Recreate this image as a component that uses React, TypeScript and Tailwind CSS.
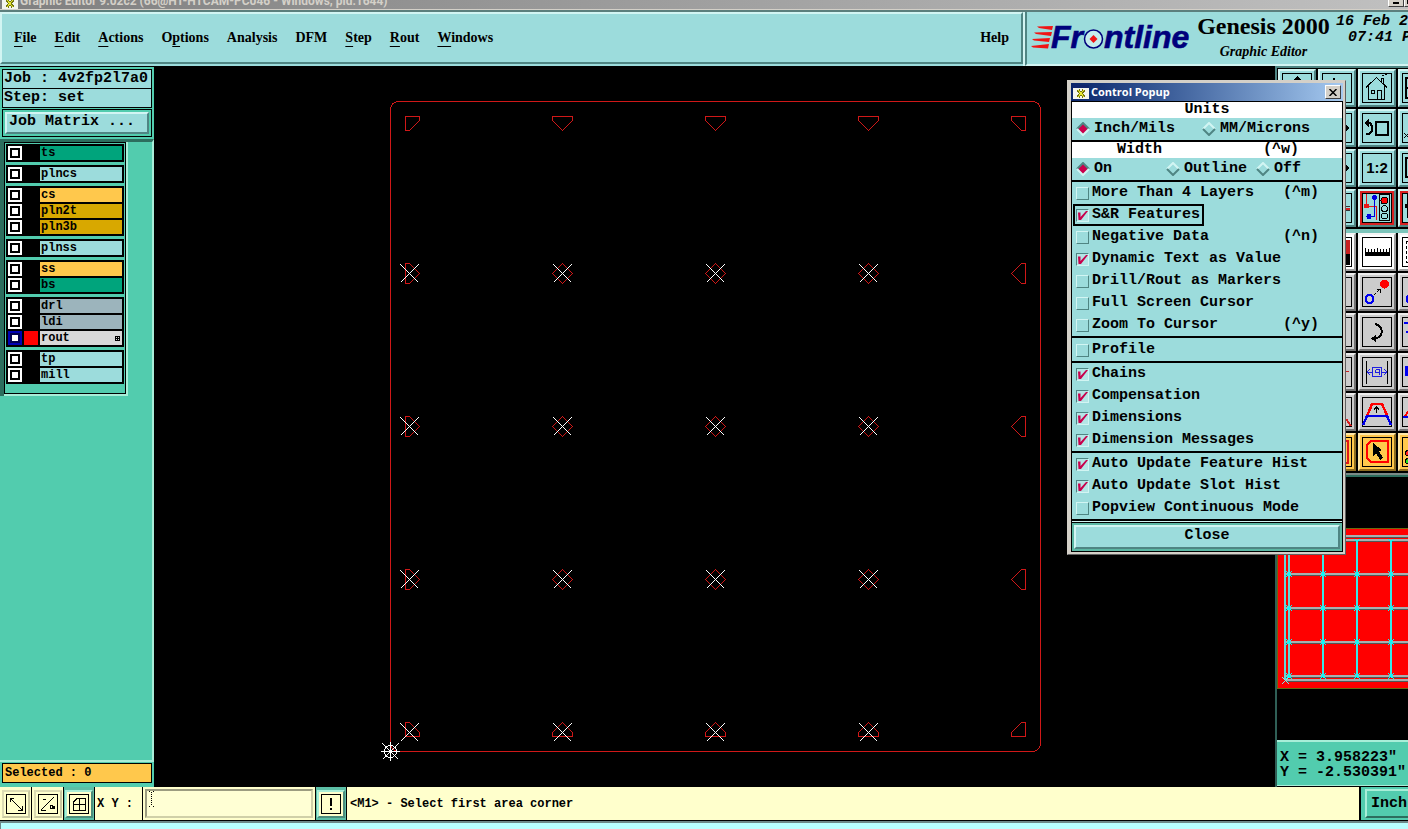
import { useState } from "react";
import type { ReactNode } from "react";

const MONO = "font-['Liberation_Mono','Courier_New',monospace]";
const SERIF = "font-['Liberation_Serif','Times_New_Roman',serif]";
const RAISED = "border-t-[#d2f5f3] border-l-[#d2f5f3] border-r-[#4f8583] border-b-[#4f8583]";

/* ===================== Header ===================== */
const MENU = [
  { pre: "", key: "F", post: "ile" },
  { pre: "", key: "E", post: "dit" },
  { pre: "", key: "A", post: "ctions" },
  { pre: "O", key: "p", post: "tions" },
  { pre: "Analysis", key: "", post: "" },
  { pre: "DFM", key: "", post: "" },
  { pre: "", key: "S", post: "tep" },
  { pre: "", key: "R", post: "out" },
  { pre: "", key: "W", post: "indows" },
];

function XIcon() {
  return (
    <svg width="16" height="14" viewBox="0 0 16 14" className="shrink-0" shapeRendering="crispEdges">
      <rect width="16" height="14" fill="#f4f4ee" />
      <rect width="16" height="3" fill="#10246c" />
      <path d="M5 5l6 7M11 5l-6 7" stroke="#77770e" strokeWidth="3" />
      <path d="M5 5l6 7M11 5l-6 7" stroke="#e8e832" strokeWidth="1" />
    </svg>
  );
}

function TitleBar() {
  return (
    <div className="flex h-[10px] items-end overflow-hidden border-b border-[#d4d0c8] bg-linear-to-r from-[#808080] to-[#c0c0c0] pr-1 pl-0.5">
      <XIcon />
      <span className="ml-0.5 flex-1 font-['Roboto','Noto_Sans',sans-serif] text-[12px] leading-[16px] font-bold whitespace-nowrap text-[#d4d0c8]">
        Graphic Editor 9.02c2 (66@HT-HTCAM-PC046 - Windows, pid:1644)
      </span>
      <button aria-label="Minimize" className="mb-0.5 flex h-[14px] w-4 shrink-0 items-end border border-t-white border-r-[#404040] border-b-[#404040] border-l-white bg-[#d4d0c8] pb-0.5 pl-1">
        <span className="h-0.5 w-1.5 bg-black" />
      </button>
      <button aria-label="Maximize" className="mb-0.5 h-[14px] w-4 -mr-4 shrink-0 border border-t-white border-r-[#404040] border-b-[#404040] border-l-white bg-[#d4d0c8] p-0.5">
        <span className="block size-full border border-black" />
      </button>
    </div>
  );
}

function Logo() {
  return (
    <svg width="160" height="44" viewBox="0 -8 160 44" className="shrink-0" role="img" aria-label="Frontline">
      <g fill="#f01414">
        <path d="M6 2.500L22 2L21 6L8 4z" />
        <path d="M3 8.500L21 8L20 12L5 10z" />
        <path d="M1 15L19 14L18 18L3 16.500z" />
        <path d="M0 22L18 20L17 24.500L2 23.500z" />
      </g>
      <g fill="#00007c" stroke="#00007c" strokeWidth="0.6" className="font-['Liberation_Sans',Arial,sans-serif] text-[32px] font-bold italic">
        <text x="20" y="24">Fr</text>
        <text x="73" y="24">ntline</text>
      </g>
      <circle cx="62.500" cy="15" r="9" fill="#c4ecec" stroke="#00007c" strokeWidth="1.500" />
      <path d="M62.500 11L66.500 15L62.500 19L58.500 15z" fill="#f01414" />
    </svg>
  );
}

function Header() {
  return (
    <header className="flex h-14 shrink-0 border-t-2 border-[#5b7f7d] bg-[#9cdcdc]">
      <nav className={`mb-0.5 flex min-w-0 flex-1 items-center gap-[18px] border-2 pr-3 pl-3 text-[14px] leading-5 font-bold ${RAISED} ${SERIF}`}>
        {MENU.map((m) => (
          <button key={m.pre + m.key + m.post} className="whitespace-nowrap">
            {m.pre}
            {m.key && <span className="underline decoration-1 underline-offset-4">{m.key}</span>}
            {m.post}
          </button>
        ))}
        <button className="ml-auto">Help</button>
      </nav>
      <div className="w-0.5 bg-[#d2f5f3]" />
      <div className="flex w-[383px] shrink-0 overflow-hidden border-b-2 border-l-2 border-b-[#d2f5f3] border-l-[#4f8583] pl-1">
        <div className="pt-1">
          <Logo />
        </div>
        <div className={`flex w-[145px] shrink-0 flex-col items-center whitespace-nowrap ${SERIF}`}>
          <h1 className="text-[24px] leading-7 font-bold">Genesis 2000</h1>
          <h2 className="mt-0.5 text-[14px] leading-5 font-bold italic">Graphic Editor</h2>
        </div>
        <div className={`pt-0.5 text-[15px] leading-4 font-bold whitespace-pre italic ${MONO}`}>
          <div>16 Feb 2</div>
          <div className="pl-3">07:41 P</div>
        </div>
      </div>
    </header>
  );
}

/* ===================== Layer list ===================== */
type Layer = { name: string; color: string; active?: boolean };

const TEAL = "bg-[#00a47c]";
const CYAN = "bg-[#9cdcdc]";
const AMBER = "bg-[#ffc84c]";
const GOLD = "bg-[#d8a800]";
const SLATE = "bg-[#9cb4bc]";

const LAYERS: Layer[][] = [
  [{ name: "ts", color: TEAL }],
  [{ name: "plncs", color: CYAN }],
  [
    { name: "cs", color: AMBER },
    { name: "pln2t", color: GOLD },
    { name: "pln3b", color: GOLD },
  ],
  [{ name: "plnss", color: CYAN }],
  [
    { name: "ss", color: AMBER },
    { name: "bs", color: TEAL },
  ],
  [
    { name: "drl", color: SLATE },
    { name: "ldi", color: SLATE },
    { name: "rout", color: "bg-[#d8d8d8]", active: true },
  ],
  [
    { name: "tp", color: CYAN },
    { name: "mill", color: CYAN },
  ],
];

function LayerRow({ layer }: { layer: Layer }) {
  return (
    <div className="flex h-3.5 gap-0.5">
      <button
        aria-label={`Show ${layer.name}`}
        className={`size-3.5 shrink-0 p-0.5 ${layer.active ? "bg-[#0000b4]" : "bg-white"}`}
      >
        <span className={`block size-2.5 border-2 bg-white ${layer.active ? "border-[#000050]" : "border-black"}`} />
      </button>
      <span className={`size-3.5 shrink-0 ${layer.active ? "bg-[#ff0000]" : "bg-black"}`} />
      <button className={`flex flex-1 items-center justify-between pl-px text-[12px] leading-[14px] font-bold ${layer.color}`}>
        {layer.name}
        {layer.active && (
          <svg width="5" height="5" viewBox="0 0 5 5" className="mr-0.5" shapeRendering="crispEdges">
            <path d="M0 .5h5M0 2.500h5M0 4.500h5M.5 0v5M2.500 0v5M4.500 0v5" stroke="#000" />
          </svg>
        )}
      </button>
    </div>
  );
}

function LeftPanel() {
  return (
    <aside className={`flex w-[154px] shrink-0 flex-col bg-[#52ccae] ${MONO}`}>
      <div className="border-t border-black px-0.5 pt-0.5">
        <div className="border border-black bg-[#9cdcdc] pl-px text-[15px] leading-[18px] font-bold whitespace-nowrap">Job : 4v2fp2l7a0</div>
        <div className="border border-t-0 border-black bg-[#9cdcdc] pl-px text-[15px] leading-[18px] font-bold">Step: set</div>
        <div className="mt-px border border-black p-0.5">
          <button className={`block w-full border-2 bg-[#9cdcdc] pt-px pb-[3px] pl-0.5 text-left text-[15px] leading-[14px] font-bold ${RAISED}`}>
            Job Matrix ...
          </button>
        </div>
      </div>
      <div className="mt-0.5 flex flex-1 flex-col border-t-3 border-r-2 border-t-[#2c6e5e] border-r-[#a8eed8]">
        <div className="flex">
          <div className="w-1 shrink-0 bg-[#2c6e5e]" />
          <div className="w-[124px] border-r-2 border-b-2 border-[#a8eed8]">
            <div className="flex flex-col gap-[3px] border border-black p-px pb-[9px]">
              {LAYERS.map((group) => (
                <div key={group[0].name} className="flex flex-col gap-0.5 bg-black p-0.5">
                  {group.map((l) => (
                    <LayerRow key={l.name} layer={l} />
                  ))}
                </div>
              ))}
            </div>
          </div>
        </div>
        <div className="mt-auto h-0.5 bg-[#a8eed8]" />
      </div>
      <div className="mb-0.5 px-0.5 pt-px pb-0.5">
        <div className="border border-black bg-[#ffc84c] pl-0.5 text-[12px] leading-[18px] font-bold">Selected : 0</div>
      </div>
    </aside>
  );
}

/* ===================== Drawing area ===================== */
const COLS = [562.5, 715.5, 868.5];
const ROWS = [273.5, 426.5, 579.5];

function Cross({ x, y }: { x: number; y: number }) {
  return <path d={`M${x - 9} ${y - 9}l18 18M${x + 9} ${y - 9}l-18 18`} stroke="#fff" />;
}

function BoardView() {
  return (
    <svg
      className="absolute inset-0 size-full"
      viewBox="154 66 1121 721"
      preserveAspectRatio="xMinYMin meet"
      fill="none"
      shapeRendering="crispEdges"
    >
      <g stroke="#d01818">
        <rect x="390.500" y="101.500" width="650" height="650" rx="8" />
        <path d="M405.500 116.500h14v4l-10 10h-4z" />
        <path d="M1011.500 116.500h14v14h-4l-10-10z" />
        <path d="M405.500 722.500h4l10 10v4h-14z" />
        <path d="M1025.500 722.500v14h-14v-4l10-10z" />
        {COLS.map((x) => (
          <g key={x}>
            <path d={`M${x - 10} 116.500h20v4l-10 10l-10-10z`} />
            <path d={`M${x} 722.500l10 10v4h-20v-4z`} />
            {ROWS.map((y) => (
              <path key={y} d={`M${x} ${y - 10}l10 10l-10 10l-10-10z`} />
            ))}
          </g>
        ))}
        {ROWS.map((y) => (
          <g key={y}>
            <path d={`M405.500 ${y - 10}h4l10 10l-10 10h-4z`} />
            <path d={`M1025.500 ${y - 10}v20h-4l-10-10l10-10z`} />
          </g>
        ))}
      </g>
      {[409.5, ...COLS].map((x) => [...ROWS, 732.5].map((y) => <Cross key={`${x}-${y}`} x={x} y={y} />))}
      <g stroke="#fff">
        <circle cx="390.500" cy="751.500" r="6" />
        <path d="M390.500 742v19M381 751.500h19M382.500 743.500l16 16M398.500 743.500l-16 16" />
      </g>
    </svg>
  );
}

/* ===================== Tool palette ===================== */
type Tone = "cyan" | "red" | "white" | "gray" | "amber";

const TONES: Record<Tone, string> = {
  cyan: "bg-[#9cdcdc] border-t-[#d2f5f3] border-l-[#d2f5f3] border-r-[#4f8583] border-b-[#4f8583]",
  red: "bg-[#d82020] border-t-[#d2f5f3] border-l-[#d2f5f3] border-r-[#4f8583] border-b-[#4f8583]",
  white: "bg-white border-t-[#f4f4f4] border-l-[#f4f4f4] border-r-[#a0a0a0] border-b-[#a0a0a0]",
  gray: "bg-[#cccccc] border-t-[#ececec] border-l-[#ececec] border-r-[#747474] border-b-[#747474]",
  amber: "bg-[#ffc84c] border-t-[#ffe8a8] border-l-[#ffe8a8] border-r-[#8c6c20] border-b-[#8c6c20]",
};

const ARROW_TIP = <path d="M8 15h14M22 10l5 5l-5 5z" stroke="#000" fill="#000" />;

const TOOLS: { tone: Tone; name: string; icons: ReactNode[] }[] = [
  {
    tone: "cyan",
    name: "Home",
    icons: [
      <path d="M15 3l7 7h-4v14h-6V10H8z" fill="#000" />,
      <path d="M5 15h14M12 5v20" stroke="#000" strokeWidth="2" />,
      <path d="M4 14.500L14.500 4.500L25 14.500M6.500 13v13.500h16V13M9.500 17.500h3v3h-3zM15.500 26v-9h4v9M19.500 9V5h2v6M20 3l2-1M23 2l2-1" stroke="#000" />,
      <path d="M3.500 4.500h22v20h-22zM3 15h22" stroke="#000" strokeWidth="2" />,
    ],
  },
  {
    tone: "cyan",
    name: "Previous view",
    icons: [
      ARROW_TIP,
      ARROW_TIP,
      <>
        <path d="M14 9h12v13H14z" stroke="#000" strokeWidth="2" />
        <path d="M4 10h4l2 3v5l-3 3H4" stroke="#000" strokeWidth="2" />
        <path d="M2 10l5-4v8z" fill="#000" />
      </>,
      <path d="M2 20l5 5M7 20l-5 5M8 18L24 5" stroke="#000" />,
    ],
  },
  {
    tone: "cyan",
    name: "Scale 1:2",
    icons: [
      ARROW_TIP,
      ARROW_TIP,
      <text x="15" y="20" textAnchor="middle" fill="#000" className="font-['Liberation_Sans',Arial,sans-serif] text-[15px] font-bold">
        1:2
      </text>,
      <path d="M4 5h20v19H4z" stroke="#000" strokeWidth="2" />,
    ],
  },
  {
    tone: "red",
    name: "Net highlight",
    icons: [
      <path d="M4 15h22" stroke="#000" />,
      <>
        <path d="M4 13.500h24M4 17.500h24" stroke="#333" />
        <path d="M4 15.500h24" stroke="#d82020" strokeWidth="2" />
      </>,
      <>
        <path d="M4.500 1v12h10v14" stroke="#e81818" />
        <path d="M12 4v19H7" stroke="#0000e0" />
        <circle cx="4.500" cy="13" r="2.500" fill="#e81818" />
        <circle cx="12.500" cy="4.500" r="2.500" fill="#0000e0" />
        <circle cx="7" cy="23.500" r="2.500" fill="#0000e0" />
        <path d="M17.500 1.500h10v26h-10z" stroke="#000" />
        <circle cx="22.500" cy="7.500" r="3.500" fill="#ff0000" stroke="#000" />
        <circle cx="22.500" cy="15.500" r="3" stroke="#000" />
        <circle cx="22.500" cy="23" r="3" stroke="#000" />
      </>,
      <>
        <path d="M5 1v24M5 13h12" stroke="#000" />
        <circle cx="5" cy="13" r="2.500" fill="#000" />
        <circle cx="7" cy="23" r="2.500" fill="#000" />
      </>,
    ],
  },
  {
    tone: "white",
    name: "Measure",
    icons: [
      <path d="M4 4h22v22H4z" stroke="#000" />,
      <>
        <path d="M3 3h25v14H3z" fill="#c82020" />
        <path d="M3 17h25v11H3z" fill="#000" />
      </>,
      <path d="M3 19V11h1v4h2v-3h1v3h2v-3h1v3h2v-3h1v3h2v-4h1v4h2v-3h1v3h2v-3h1v3h2v-3h1v3h2v-4h1v8z" fill="#000" />,
      <path d="M4.500 4.500h20v21h-20z" stroke="#000" strokeDasharray="3 2" />,
    ],
  },
  {
    tone: "gray",
    name: "Move",
    icons: [
      null,
      null,
      <>
        <circle cx="7.500" cy="22" r="4" stroke="#0000f0" strokeWidth="2" />
        <circle cx="22.500" cy="7" r="4.500" fill="#ff0000" />
        <path d="M12 18l2-2M15 15l3-3M14.500 12.500h3.500v3.500" stroke="#000" />
      </>,
      <circle cx="7.500" cy="22" r="4" fill="#0000f0" />,
    ],
  },
  {
    tone: "gray",
    name: "Rotate",
    icons: [
      null,
      null,
      <>
        <path d="M13 7c9 2 9 13 0 14.500" stroke="#000" strokeWidth="2" />
        <path d="M9 21.500l5-3.500v7z" fill="#000" />
      </>,
      <path d="M2 6h7M4 15h8M6 9h6" stroke="#0000f0" strokeWidth="2" />,
    ],
  },
  {
    tone: "gray",
    name: "Resize",
    icons: [
      null,
      <path d="M18 14.500h9" stroke="#c82020" />,
      <>
        <path d="M4.500 4v23M25.500 4v23" stroke="#000" />
        <path d="M10.500 10.500h9v9h-9zM10 15H5M8 12l-3 3l3 3M20 15h5M22 12l3 3l-3 3M13.500 12.500v3h4M17.500 12v6M14 13l3-1" stroke="#2020e0" />
      </>,
      <path d="M3 9h12v10H3z" fill="#0000f0" />,
    ],
  },
  {
    tone: "gray",
    name: "Stretch",
    icons: [
      null,
      <path d="M24 22l5 7" stroke="#d82020" strokeWidth="2" />,
      <>
        <path d="M5.500 18L10 7h10L25 18" stroke="#ff0000" strokeWidth="2.500" />
        <path d="M1 28l4-9h20l4 9" stroke="#0000e8" strokeWidth="2.500" />
        <path d="M14.500 16v-6M12 12.500l2.500-2.500L17 12.500" stroke="#000" />
      </>,
      <>
        <path d="M3 19l6-8" stroke="#ff0000" strokeWidth="2" />
        <path d="M1 20h12" stroke="#0000e8" strokeWidth="2" />
      </>,
    ],
  },
  {
    tone: "amber",
    name: "Select polygon",
    icons: [
      null,
      <path d="M4 4h22v22H4z" stroke="#e01818" strokeWidth="2" />,
      <>
        <path d="M5 8l4-4h17v21H9l-4-4z" stroke="#ff0000" strokeWidth="2" />
        <path d="M11 6l9 7l-3 1l4 7l-3 2l-4-7l-3 3z" fill="#000" />
      </>,
      <>
        <circle cx="6" cy="16" r="2.500" fill="#ff2020" stroke="#000" />
        <circle cx="6" cy="24" r="2.500" fill="#20e020" stroke="#000" />
      </>,
    ],
  },
];

function ToolPalette() {
  return (
    <div className="flex flex-col gap-0.5 border-t-2 border-l-2 border-t-[#4f8583] border-l-[#4f8583] bg-black pt-px pl-px">
      {TOOLS.map((row, r) => (
        <div key={row.name} className={`flex gap-0.5 ${r === 4 ? "border-t-4 border-[#7cc4ba]" : ""}`}>
          {row.icons.map((icon, c) => {
            const tone = row.tone === "red" && c < 2 ? "cyan" : row.tone;
            return (
              <button key={c} aria-label={`${row.name} ${c + 1}`} className={`size-[38px] shrink-0 border-2 p-0.5 ${TONES[tone]}`}>
                <svg viewBox="0 0 30 30" fill="none" shapeRendering="crispEdges" className="size-full">
                  <rect x="0.500" y="0.500" width="29" height="29" fill={tone === "red" ? "#9cdcdc" : "none"} stroke="#000" />
                  {icon}
                </svg>
              </button>
            );
          })}
        </div>
      ))}
      <div className="h-1 border-t-2 border-[#7a8a86] bg-[#2c6e5e]" />
    </div>
  );
}

function Overview() {
  const xs = [1323, 1357, 1391];
  const ys = [574, 608, 642];
  return (
    <svg width="160" height="161" viewBox="1277 528 160 161" fill="none" shapeRendering="crispEdges" className="shrink-0">
      <rect x="1277" y="528" width="160" height="161" fill="#6a6a10" />
      <rect x="1278" y="529" width="160" height="159" fill="#ff0000" />
      {[536, 540, ...ys, 676, 680].map((y) => (
        <g key={y}>
          <path d={`M1286 ${y}h150`} stroke="#a8b0b0" strokeWidth="2" />
          <path d={`M1286 ${y + 1.5}h150`} stroke="#505858" />
        </g>
      ))}
      <path d="M1285 537v143M1289 540v137" stroke="#60d8d8" strokeWidth="2" />
      {xs.map((x) => (
        <path key={x} d={`M${x} 540v137`} stroke="#38e8e8" strokeWidth="2" />
      ))}
      {[1289, ...xs].map((x) =>
        [...ys, 676].map((y) => (
          <path key={`${x}-${y}`} d={`M${x - 3} ${y - 3}l6 6M${x + 3} ${y - 3}l-6 6M${x - 2} ${y}h4M${x} ${y - 2}v4`} stroke="#00ffff" />
        )),
      )}
      {xs.map((x) => (
        <path key={x} d={`M${x - 3} 539l3 3l3-3`} stroke="#00ffff" />
      ))}
      <path d="M1282 677l7 7M1289 677l-7 7" stroke="#80e8e8" />
    </svg>
  );
}

function RightPanel() {
  return (
    <aside className={`flex w-[133px] shrink-0 flex-col overflow-hidden bg-black ${MONO}`}>
      <ToolPalette />
      <div className="mt-[51px] flex flex-1 flex-col border-l-2 border-[#2f5f56]">
        <Overview />
        <div className="mt-auto mb-px border-t-2 border-b border-[#a8eed8] bg-[#52ccae] pt-2 pb-[5px] pl-[3px] text-[15px] leading-[15px] font-bold whitespace-nowrap">
          <div>X = 3.958223"</div>
          <div>Y = -2.530391"</div>
        </div>
      </div>
    </aside>
  );
}

/* ===================== Control popup ===================== */
function Diamond({ name, label, checked, onChange, className }: {
  name: string;
  label: string;
  checked: boolean;
  onChange: () => void;
  className: string;
}) {
  return (
    <label className={`flex items-center gap-1 ${className}`}>
      <span className="grid size-3.5 shrink-0">
        <input type="radio" name={name} checked={checked} onChange={onChange} className="size-3.5 appearance-none [grid-area:1/1]" />
        <svg viewBox="0 0 14 14" className="pointer-events-none size-3.5 [grid-area:1/1]">
          <path d="M7 1L13 7L7 13L1 7z" fill={checked ? "#c8004c" : "#9cdcdc"} />
          <path d="M1 7L7 1L13 7" fill="none" stroke={checked ? "#4f8583" : "#d2f5f3"} strokeWidth="2" />
          <path d="M1 7L7 13L13 7" fill="none" stroke={checked ? "#d2f5f3" : "#4f8583"} strokeWidth="2" />
        </svg>
      </span>
      {label}
    </label>
  );
}

type Option = { label: string; on: boolean; hint?: string; focus?: boolean };

const SECTIONS: Option[][] = [
  [
    { label: "More Than 4 Layers", on: false, hint: "(^m)" },
    { label: "S&R Features", on: true, focus: true },
    { label: "Negative Data", on: false, hint: "(^n)" },
    { label: "Dynamic Text as Value", on: true },
    { label: "Drill/Rout as Markers", on: false },
    { label: "Full Screen Cursor", on: false },
    { label: "Zoom To Cursor", on: false, hint: "(^y)" },
  ],
  [{ label: "Profile", on: false }],
  [
    { label: "Chains", on: true },
    { label: "Compensation", on: true },
    { label: "Dimensions", on: true },
    { label: "Dimension Messages", on: true },
  ],
  [
    { label: "Auto Update Feature Hist", on: true },
    { label: "Auto Update Slot Hist", on: true },
    { label: "Popview Continuous Mode", on: false },
  ],
];

function OptionRow({ option }: { option: Option }) {
  const [on, setOn] = useState(option.on);
  return (
    <div className="flex h-[22px] items-center pr-[23px] pl-px">
      <label className={`flex h-full items-center gap-[3px] border-2 pr-0.5 pl-px ${option.focus ? "border-black" : "border-transparent"}`}>
        <span className="grid size-[13px] shrink-0">
          <input
            type="checkbox"
            checked={on}
            onChange={(e) => setOn(e.target.checked)}
            className={`size-[13px] appearance-none border [grid-area:1/1] ${
              on
                ? "border-t-[#4f8583] border-r-[#d2f5f3] border-b-[#d2f5f3] border-l-[#4f8583] bg-[#b4e6e6]"
                : "border-t-[#d2f5f3] border-r-[#4f8583] border-b-[#4f8583] border-l-[#d2f5f3]"
            }`}
          />
          {on && (
            <svg viewBox="0 0 13 13" className="pointer-events-none size-[13px] [grid-area:1/1]">
              <path d="M2 3.500h2.500v4.500L10 2h2L5 11H2.500z" fill="#c8004c" />
            </svg>
          )}
        </span>
        {option.label}
      </label>
      {option.hint && <span className="ml-auto">{option.hint}</span>}
    </div>
  );
}

function ControlPopup() {
  const [units, setUnits] = useState("Inch/Mils");
  const [width, setWidth] = useState("On");

  return (
    <section
      aria-label="Control Popup"
      className="absolute top-[14px] right-[62px] w-[279px] border border-t-[#d4d0c8] border-r-[#606060] border-b-[#606060] border-l-[#d4d0c8] bg-[#d4d0c8] pt-0.5 pr-0.5 pb-0.5 pl-[3px]"
    >
      <div className="flex h-[18px] items-center bg-linear-to-r from-[#0a246a] to-[#a6caf0] px-0.5 text-white">
        <XIcon />
        <span className="ml-0.5 font-['Open_Sans','Noto_Sans',sans-serif] text-[11px] leading-4 font-bold">Control Popup</span>
        <button aria-label="Close window" className="ml-auto flex h-[14px] w-4 items-center justify-center border border-t-white border-r-[#404040] border-b-[#404040] border-l-white bg-[#d4d0c8]">
          <svg width="8" height="7" viewBox="0 0 8 7">
            <path d="M.5 0l7 7M7.500 0l-7 7" stroke="#000" strokeWidth="1.500" />
          </svg>
        </button>
      </div>
      <div className={`border border-black bg-[#9cdcdc] text-[15px] leading-4 font-bold whitespace-nowrap text-black ${MONO}`}>
        <div className="bg-white text-center">Units</div>
        <div className="flex h-[22px] items-center border-black pl-1">
          <Diamond name="units" label="Inch/Mils" className="w-[126px]" checked={units === "Inch/Mils"} onChange={() => setUnits("Inch/Mils")} />
          <Diamond name="units" label="MM/Microns" className="" checked={units === "MM/Microns"} onChange={() => setUnits("MM/Microns")} />
        </div>
        <div className="flex justify-between border-t-2 border-black bg-white pr-[43px] pl-[45px]">
          <span>Width</span>
          <span>(^w)</span>
        </div>
        <div className="flex h-[22px] items-center pl-1">
          <Diamond name="width" label="On" className="w-[90px]" checked={width === "On"} onChange={() => setWidth("On")} />
          <Diamond name="width" label="Outline" className="w-[90px]" checked={width === "Outline"} onChange={() => setWidth("Outline")} />
          <Diamond name="width" label="Off" className="" checked={width === "Off"} onChange={() => setWidth("Off")} />
        </div>
        {SECTIONS.map((options, i) => (
          <div key={i} className={`border-t-2 border-black ${i === 1 ? "pt-px" : ""}`}>
            {options.map((o) => (
              <OptionRow key={o.label} option={o} />
            ))}
          </div>
        ))}
        <div className="border-t-2 border-black bg-[#d2f5f3] pt-px">
          <div className="border-t border-black bg-[#5cb8a4] p-0.5">
            <button className={`block w-full border-2 bg-[#9cdcdc] pt-px pb-[3px] text-center leading-4 ${RAISED}`}>Close</button>
          </div>
        </div>
      </div>
    </section>
  );
}

/* ===================== Status bar ===================== */
function BarButton({ label, framed, children }: { label: string; framed?: boolean; children: ReactNode }) {
  return (
    <button
      aria-label={label}
      className={`flex shrink-0 items-center justify-center border-r border-black ${framed ? "w-[31px] bg-[#5cbfa6]" : "w-8"}`}
    >
      <span className={`flex size-[28px] items-center justify-center border-2 bg-[#ffffcc] ${framed ? "border-t-[#a8eed8] border-r-[#4c8c7c] border-b-[#4c8c7c] border-l-[#a8eed8]" : "border-t-[#dcdcb4] border-r-[#c8c8a0] border-b-[#c8c8a0] border-l-[#dcdcb4]"}`}>
        <svg width="20" height="20" viewBox="0 0 20 20" fill="none" stroke="#000" shapeRendering="crispEdges">
          <path d="M.5 .5h19v19H.5z" />
          {children}
        </svg>
      </span>
    </button>
  );
}

function StatusBar() {
  const [xy, setXy] = useState("");
  return (
    <footer className={`shrink-0 bg-[#b8ffff] text-[12px] leading-4 font-bold ${MONO}`}>
      <div className="flex h-[34px] overflow-hidden border-b border-black bg-[#ffffcc]">
        <BarButton label="Zoom area">
          <path d="M4 4l12 12M4 8V4h4M16 12v4h-4" />
        </BarButton>
        <BarButton label="Angle snap">
          <path d="M3 16L16 3M3 16h5M5 5h3M12 11.500h2v3h-2zM15 12l2 3M17 12l-2 3" />
        </BarButton>
        <BarButton label="Grid" framed>
          <path d="M4.500 8l4-4h8v12.500h-12zM10.500 4v12.500M4.500 10.500h12" />
        </BarButton>
        <label htmlFor="xy" className="flex w-12 shrink-0 items-center border-r border-black pl-0.5 whitespace-nowrap">
          X Y :
        </label>
        <div className="relative w-[173px] shrink-0 border-r border-black p-0.5">
          <input
            id="xy"
            value={xy}
            onChange={(e) => setXy(e.target.value)}
            className="block size-full border-2 border-t-[#9c9c80] border-r-[#d0d0a8] border-b-[#d0d0a8] border-l-[#9c9c80] bg-[#ffffd4] pl-2 outline-none"
          />
          <svg width="5" height="16" viewBox="0 0 5 16" className="pointer-events-none absolute top-1 left-1.5" shapeRendering="crispEdges">
            <path d="M2.500 1v14" stroke="#000" strokeDasharray="1 1" />
            <path d="M0 .5h1M4 .5h1M0 15.500h1M4 15.500h1" stroke="#000" />
          </svg>
        </div>
        <BarButton label="Messages" framed>
          <path d="M10 4v8M10 14v2" strokeWidth="2" />
        </BarButton>
        <span className="flex flex-1 items-center pl-[3px] whitespace-nowrap">&lt;M1&gt; - Select first area corner</span>
        <div className="w-[49px] shrink-0 border-l-2 border-black bg-[#52ccae] py-0.5 pl-1">
          <button className="block h-full w-14 border-2 border-t-[#a8eed8] border-r-[#2c6e5e] border-b-[#2c6e5e] border-l-[#a8eed8] pl-1 text-left text-[15px]">
            Inch
          </button>
        </div>
      </div>
      <div className="h-2 border-t-2 border-l border-[#6c8888]" />
    </footer>
  );
}

export default function App() {
  return (
    <div className="flex min-h-screen flex-col overflow-hidden bg-black text-black">
      <TitleBar />
      <Header />
      <main className="relative flex flex-1">
        <LeftPanel />
        <div className="relative min-w-0 flex-1 overflow-hidden bg-black">
          <BoardView />
        </div>
        <RightPanel />
        <ControlPopup />
      </main>
      <StatusBar />
    </div>
  );
}
